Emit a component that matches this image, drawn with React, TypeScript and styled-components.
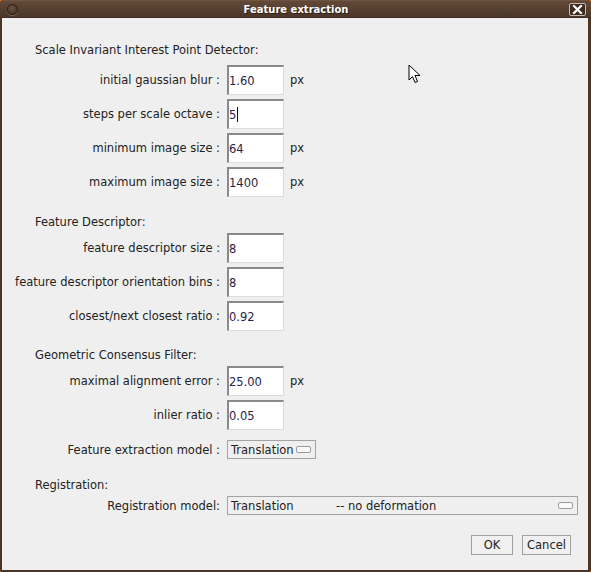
import styled, { createGlobalStyle } from 'styled-components';

const GlobalStyle = createGlobalStyle`
  html, body {
    margin: 0;
    padding: 0;
    background: #d56e1f;
  }
  body {
    font-family: 'DejaVu Sans', 'Liberation Sans', sans-serif;
  }
`;

const Window = styled.div`
  position: relative;
  width: 591px;
  height: 572px;
  display: flex;
  flex-direction: column;
  background: #4a3527;
  border-radius: 4px 4px 2px 2px;
  overflow: hidden;
  box-sizing: border-box;
`;

const TitleBar = styled.div`
  height: 18px;
  flex: 0 0 18px;
  display: flex;
  align-items: center;
  justify-content: space-between;
  padding: 0 5px 0 7px;
  background: linear-gradient(#7c604c 0, #624938 1px, #574030 9px, #4b3629 17px, #3a2a20 18px);
  box-sizing: border-box;
`;

const RoundButton = styled.div`
  width: 9px;
  height: 9px;
  border-radius: 50%;
  background: radial-gradient(circle at 40% 35%, #6b5546, #3d2c21);
  border: 1px solid #2c1f17;
  box-shadow: 0 1px 0 #7a6050;
`;

const Title = styled.div`
  color: #ffffff;
  font-size: 10px;
  font-weight: bold;
  text-shadow: 1px 1px 0 #2a1d15;
  margin-left: 5px;
`;

const CloseButton = styled.div`
  width: 15px;
  height: 11px;
  border: 1px solid #c8bcb2;
  border-radius: 2px;
  background: #3e2c21;
  display: flex;
  align-items: center;
  justify-content: center;
`;

const Body = styled.div`
  flex: 1;
  margin: 0 3px 2px 2px;
  background: #efefef;
  padding: 25px 0 0 0;
  color: #222222;
  font-size: 11.5px;
  display: flex;
  flex-direction: column;
`;

const Heading = styled.div<{ $top: number }>`
  margin: ${(p) => p.$top}px 0 0 33px;
  height: 14px;
  line-height: 14px;
`;

const FormGrid = styled.div<{ $top: number }>`
  display: grid;
  grid-template-columns: 218px 57px auto;
  column-gap: 7px;
  row-gap: 4px;
  margin-top: ${(p) => p.$top}px;
  align-items: center;
`;

const Label = styled.div`
  text-align: right;
  white-space: nowrap;
`;

const TextField = styled.div`
  box-sizing: border-box;
  height: 30px;
  background: #ffffff;
  border-top: 2px solid #8a8a8a;
  border-left: 2px solid #8a8a8a;
  border-right: 1px solid #dcdcdc;
  border-bottom: 1px solid #dcdcdc;
  display: flex;
  align-items: center;
  color: #1f1f4a;
`;

const Caret = styled.span`
  display: inline-block;
  width: 1px;
  height: 15px;
  background: #111111;
  margin-left: 1px;
`;

const Unit = styled.div`
  margin-left: -1px;
`;

const Choice = styled.div<{ $wide?: boolean }>`
  box-sizing: border-box;
  height: 19px;
  width: ${(p) => (p.$wide ? '351px' : '89px')};
  border: 1px solid #a3a3a3;
  background: #efefef;
  display: flex;
  align-items: center;
  padding: 0 3px 0 3px;
  white-space: pre;
`;

const ChoiceText = styled.span`
  flex: 1;
`;

const ChoiceName = styled.span`
  display: inline-block;
  width: 105px;
`;

const ChoiceIndicator = styled.span`
  width: 13px;
  height: 5px;
  border: 1px solid #9a9a9a;
  border-radius: 2px;
  background: #fafafa;
  margin-right: 1px;
`;

const ChoiceGrid = styled.div<{ $top: number }>`
  display: grid;
  grid-template-columns: 218px auto;
  column-gap: 7px;
  margin-top: ${(p) => p.$top}px;
  align-items: center;
`;

const ButtonRow = styled.div`
  display: flex;
  justify-content: flex-end;
  gap: 9px;
  margin: 20px 17px 0 0;
`;

const Button = styled.button`
  box-sizing: border-box;
  height: 20px;
  padding: 0 4px;
  border: 1px solid #a0a0a0;
  background: #f0f0f0;
  font-family: inherit;
  font-size: 11.5px;
  color: #222222;
  min-width: 42px;
`;

const Cursor = styled.svg`
  position: absolute;
  left: 408px;
  top: 64px;
`;

type Row = { label: string; value: string; unit?: string; caret?: boolean };

const scaleRows: Row[] = [
  { label: 'initial gaussian blur :', value: '1.60', unit: 'px' },
  { label: 'steps per scale octave :', value: '5', caret: true },
  { label: 'minimum image size :', value: '64', unit: 'px' },
  { label: 'maximum image size :', value: '1400', unit: 'px' },
];

const descriptorRows: Row[] = [
  { label: 'feature descriptor size :', value: '8' },
  { label: 'feature descriptor orientation bins :', value: '8' },
  { label: 'closest/next closest ratio :', value: '0.92' },
];

const filterRows: Row[] = [
  { label: 'maximal alignment error :', value: '25.00', unit: 'px' },
  { label: 'inlier ratio :', value: '0.05' },
];

const Fields = ({ rows, top }: { rows: Row[]; top: number }) => (
  <FormGrid $top={top}>
    {rows.flatMap((r) => [
      <Label key={r.label + '-l'}>{r.label}</Label>,
      <TextField key={r.label + '-f'}>
        {r.value}
        {r.caret && <Caret />}
      </TextField>,
      <Unit key={r.label + '-u'}>{r.unit ?? ''}</Unit>,
    ])}
  </FormGrid>
);

export default function App() {
  return (
    <>
      <GlobalStyle />
      <Window>
        <TitleBar>
          <RoundButton />
          <Title>Feature extraction</Title>
          <CloseButton>
            <svg width="11" height="9" viewBox="0 0 11 9">
              <path d="M2 1 L9 8 M9 1 L2 8" stroke="#ffffff" strokeWidth="2.2" strokeLinecap="square" />
            </svg>
          </CloseButton>
        </TitleBar>
        <Body>
          <Heading $top={0}>Scale Invariant Interest Point Detector:</Heading>
          <Fields rows={scaleRows} top={8} />
          <Heading $top={18}>Feature Descriptor:</Heading>
          <Fields rows={descriptorRows} top={4} />
          <Heading $top={17}>Geometric Consensus Filter:</Heading>
          <Fields rows={filterRows} top={4} />
          <ChoiceGrid $top={10}>
            <Label>Feature extraction model :</Label>
            <Choice>
              <ChoiceText>Translation</ChoiceText>
              <ChoiceIndicator />
            </Choice>
          </ChoiceGrid>
          <Heading $top={19}>Registration:</Heading>
          <ChoiceGrid $top={4}>
            <Label>Registration model:</Label>
            <Choice $wide>
              <ChoiceText>
                <ChoiceName>Translation</ChoiceName>-- no deformation
              </ChoiceText>
              <ChoiceIndicator />
            </Choice>
          </ChoiceGrid>
          <ButtonRow>
            <Button>OK</Button>
            <Button>Cancel</Button>
          </ButtonRow>
        </Body>
        <Cursor width="13" height="20" viewBox="0 0 13 20">
          <path
            d="M1 1 L1 16 L4.5 12.5 L7 18.5 L9.5 17.5 L7 11.5 L12 11.5 Z"
            fill="#ffffff"
            stroke="#000000"
            strokeWidth="1"
            strokeLinejoin="miter"
          />
        </Cursor>
      </Window>
    </>
  );
}
